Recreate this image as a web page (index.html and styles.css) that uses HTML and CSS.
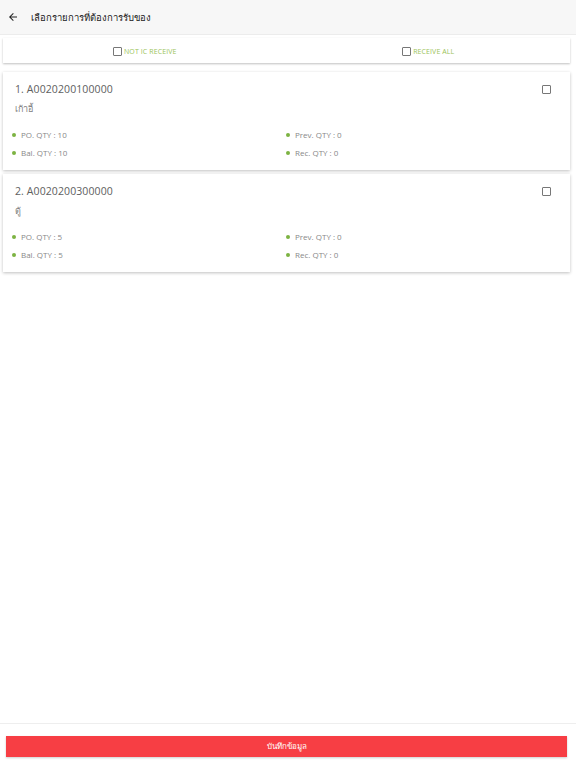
FILE: index.html
```html
<!DOCTYPE html>
<html lang="th">
  <head>
    <title>เลือกรายการที่ต้องการรับของ</title>
    <meta charset="utf-8" />
    <link rel="stylesheet" href="styles.css">
  </head>
  <body>
    <div class="page">
      <div class="toolbar">
        <svg class="back" width="12" height="12" viewBox="0 0 24 24">
          <path d="M20 11H7.83l5.59-5.59L12 4l-8 8 8 8 1.41-1.41L7.83 13H20v-2z" fill="#222" />
        </svg>
        <span class="toolbar-title">เลือกรายการที่ต้องการรับของ</span>
      </div>

      <div class="tabs">
        <label class="tab"><span class="box"></span>NOT IC RECEIVE</label>
        <label class="tab"><span class="box"></span>RECEIVE ALL</label>
      </div>

      <div class="list">
        <div class="card">
          <div class="card-head">
            <span class="card-title">1. A0020200100000</span>
            <span class="box box-card"></span>
          </div>
          <div class="card-name">เก้าอี้</div>
          <div class="card-grid">
            <div class="qty"><span class="dot"></span>PO. QTY : 10</div>
            <div class="qty"><span class="dot"></span>Prev. QTY : 0</div>
            <div class="qty"><span class="dot"></span>Bal. QTY : 10</div>
            <div class="qty"><span class="dot"></span>Rec. QTY : 0</div>
          </div>
        </div>

        <div class="card">
          <div class="card-head">
            <span class="card-title">2. A0020200300000</span>
            <span class="box box-card"></span>
          </div>
          <div class="card-name">ตู้</div>
          <div class="card-grid">
            <div class="qty"><span class="dot"></span>PO. QTY : 5</div>
            <div class="qty"><span class="dot"></span>Prev. QTY : 0</div>
            <div class="qty"><span class="dot"></span>Bal. QTY : 5</div>
            <div class="qty"><span class="dot"></span>Rec. QTY : 0</div>
          </div>
        </div>
      </div>

      <div class="footer">
        <button class="save">บันทึกข้อมูล</button>
      </div>
    </div>
  </body>
</html>
```

FILE: styles.css
```css
html, body {
  margin: 0;
  padding: 0;
  background-color: #fff;
}

.page {
  width: 576px;
  height: 768px;
  display: flex;
  flex-direction: column;
  font-family: 'Open Sans', 'Noto Sans', sans-serif;
}

.toolbar {
  height: 35px;
  display: flex;
  align-items: center;
  background-color: #f7f7f7;
  border-bottom: 1px solid #ececec;
  box-sizing: border-box;
}

.back {
  margin-left: 7px;
}

.toolbar-title {
  margin-left: 12px;
  margin-top: 1px;
  font-size: 9.5px;
  color: #222;
}

.tabs {
  margin: 3px 6px 0 3px;
  height: 25px;
  display: flex;
  background-color: #fff;
  box-shadow: 0 1px 2px rgba(0, 0, 0, 0.25);
}

.tab {
  flex: 1;
  display: flex;
  align-items: center;
  justify-content: center;
  padding-top: 2px;
  font-size: 7px;
  color: #9bc35a;
  letter-spacing: 0.1px;
}

.box {
  width: 7px;
  height: 7px;
  border: 1px solid #777;
  border-radius: 1px;
  margin-right: 2px;
}

.list {
  flex: 1;
  margin-top: 9px;
}

.card {
  margin: 0 6px 4px 3px;
  padding: 10px 12px 10px 12px;
  height: 98px;
  box-sizing: border-box;
  background-color: #fff;
  box-shadow: 0 1px 3px rgba(0, 0, 0, 0.25);
}

.card-head {
  display: flex;
  justify-content: space-between;
  align-items: flex-start;
}

.card-title {
  font-size: 10.5px;
  color: #606060;
  letter-spacing: 0.1px;
}

.box-card {
  margin: 3px 7px 0 0;
  width: 7px;
  height: 7px;
}

.card-name {
  margin-top: 6px;
  font-size: 9px;
  color: #808080;
}

.card-grid {
  margin-top: 13px;
  margin-left: -3px;
  display: grid;
  grid-template-columns: 274px 1fr;
  row-gap: 7px;
}

.qty {
  display: flex;
  align-items: center;
  font-size: 8px;
  color: #888;
}

.dot {
  width: 4px;
  height: 4px;
  border-radius: 50%;
  background-color: #7cb342;
  margin-right: 5px;
}

.footer {
  height: 45px;
  border-top: 1px solid #eee;
  display: flex;
  align-items: flex-start;
  padding: 12px 9px 0 6px;
  box-sizing: border-box;
}

.save {
  width: 100%;
  height: 21px;
  border: none;
  background-color: #f73e44;
  color: #fff;
  font-family: 'Open Sans', 'Noto Sans', sans-serif;
  font-size: 8px;
  box-shadow: 0 1px 2px rgba(0, 0, 0, 0.2);
}
```
